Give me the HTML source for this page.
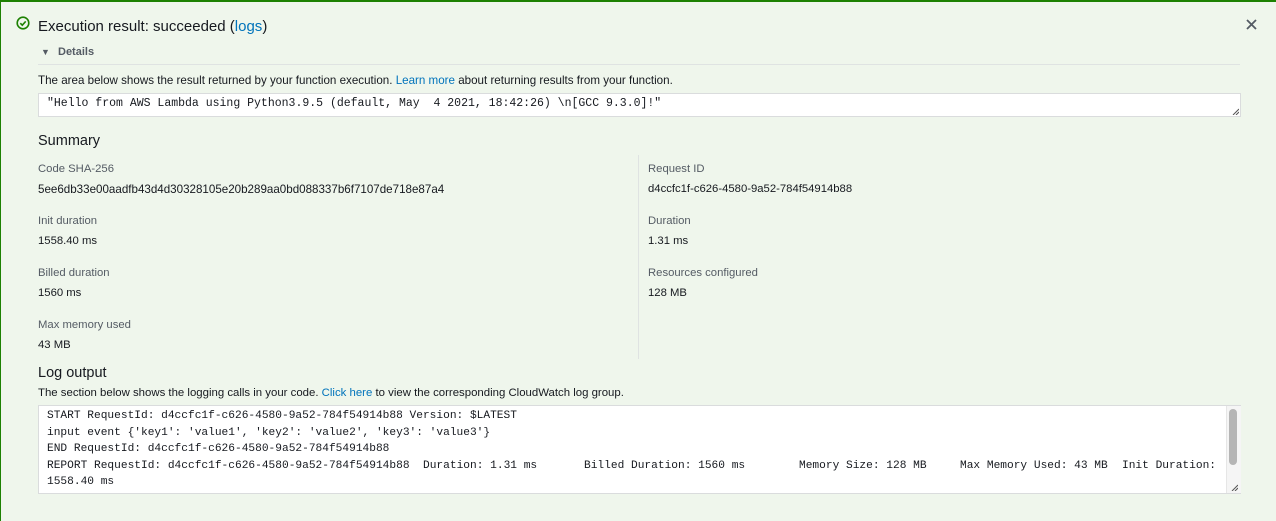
<!DOCTYPE html>
<html><head><style>
body{margin:0;width:1276px;height:521px;overflow:hidden;background:#eff6ec;font-family:"Liberation Sans",sans-serif;color:#16191f;position:relative}
.frame{position:absolute;left:0;top:0;width:1276px;height:521px;border-left:1px solid #1d8102;border-top:2px solid #1d8102;box-sizing:border-box}
.a{position:absolute;white-space:pre}
.lbl{font-size:11.3px;color:#545b64}
.val{font-size:11.3px;color:#16191f}
.h{font-size:14.5px;color:#16191f}
a{color:#0073bb;text-decoration:none}
.box{position:absolute;background:#fff;border:1px solid #dadcdd;box-sizing:border-box}
.mono{font-family:"Liberation Mono",monospace;font-size:11.5px;color:#16191f}
.lg{font-size:11.2px}
</style></head><body>
<div class="frame"></div>
<svg class="a" style="left:16px;top:16px" width="14" height="14" viewBox="0 0 14 14"><circle cx="7" cy="7" r="5.8" fill="none" stroke="#1d8102" stroke-width="1.6"/><path d="M4.3 7.2l2 2 3.4-3.8" fill="none" stroke="#1d8102" stroke-width="1.6"/></svg>
<div class="a" style="left:38px;top:18px;font-size:15px">Execution result: succeeded (<a>logs</a>)</div>
<svg class="a" style="left:1246px;top:19px" width="11" height="11" viewBox="0 0 11 11"><path d="M1 1L10 10M10 1L1 10" stroke="#545b64" stroke-width="1.8"/></svg>
<div class="a" style="left:41px;top:47px;font-size:9px;color:#545b64">▼</div>
<div class="a" style="left:58px;top:46px;font-size:11px;font-weight:bold;color:#545b64">Details</div>
<div class="a" style="left:38px;top:64px;width:1202px;height:1px;background:#dfe3e2"></div>
<div class="a" style="left:38px;top:74px;font-size:11.6px">The area below shows the result returned by your function execution. <a>Learn more</a> about returning results from your function.</div>
<div class="box" style="left:38px;top:93px;width:1203px;height:24px"></div>
<div class="a mono" style="left:47px;top:97px">"Hello from AWS Lambda using Python3.9.5 (default, May  4 2021, 18:42:26) \n[GCC 9.3.0]!"</div>
<svg class="a" style="left:1232px;top:108px" width="7" height="7"><path d="M1 7L7 1M4 7L7 4" stroke="#555" stroke-width="1"/></svg>
<div class="a h" style="left:38px;top:133px">Summary</div>
<div class="a" style="left:638px;top:155px;width:1px;height:204px;background:#dfe3e2"></div>
<div class="a lbl" style="left:38px;top:163px">Code SHA-256</div>
<div class="a val" style="left:38px;top:183px;font-size:11.6px">5ee6db33e00aadfb43d4d30328105e20b289aa0bd088337b6f7107de718e87a4</div>
<div class="a lbl" style="left:38px;top:215px">Init duration</div>
<div class="a val" style="left:38px;top:235px">1558.40 ms</div>
<div class="a lbl" style="left:38px;top:267px">Billed duration</div>
<div class="a val" style="left:38px;top:287px">1560 ms</div>
<div class="a lbl" style="left:38px;top:319px">Max memory used</div>
<div class="a val" style="left:38px;top:339px">43 MB</div>
<div class="a lbl" style="left:648px;top:163px">Request ID</div>
<div class="a val" style="left:648px;top:183px">d4ccfc1f-c626-4580-9a52-784f54914b88</div>
<div class="a lbl" style="left:648px;top:215px">Duration</div>
<div class="a val" style="left:648px;top:235px">1.31 ms</div>
<div class="a lbl" style="left:648px;top:267px">Resources configured</div>
<div class="a val" style="left:648px;top:287px">128 MB</div>
<div class="a h" style="left:38px;top:365px">Log output</div>
<div class="a" style="left:38px;top:387px;font-size:11.4px">The section below shows the logging calls in your code. <a>Click here</a> to view the corresponding CloudWatch log group.</div>
<div class="box" style="left:38px;top:405px;width:1203px;height:89px"></div>
<div class="a" style="left:1226px;top:406px;width:14px;height:87px;background:#f5f5f5;border-left:1px solid #e6e6e6"></div>
<div class="a" style="left:1229px;top:409px;width:8px;height:56px;background:#b5b5b5;border-radius:4px"></div>
<div class="a mono lg" style="left:47px;top:410px">START RequestId: d4ccfc1f-c626-4580-9a52-784f54914b88 Version: $LATEST</div>
<div class="a mono lg" style="left:47px;top:426.5px">input event {'key1': 'value1', 'key2': 'value2', 'key3': 'value3'}</div>
<div class="a mono lg" style="left:47px;top:443px">END RequestId: d4ccfc1f-c626-4580-9a52-784f54914b88</div>
<div class="a mono lg" style="left:47px;top:459.5px">REPORT RequestId: d4ccfc1f-c626-4580-9a52-784f54914b88</div>
<div class="a mono lg" style="left:423px;top:459.5px">Duration: 1.31 ms</div>
<div class="a mono lg" style="left:584px;top:459.5px">Billed Duration: 1560 ms</div>
<div class="a mono lg" style="left:799px;top:459.5px">Memory Size: 128 MB</div>
<div class="a mono lg" style="left:960px;top:459.5px">Max Memory Used: 43 MB</div>
<div class="a mono lg" style="left:1122px;top:459.5px">Init Duration:</div>
<div class="a mono lg" style="left:47px;top:476px">1558.40 ms</div>
<svg class="a" style="left:1231px;top:484px" width="7" height="7"><path d="M1 7L7 1M4 7L7 4" stroke="#555" stroke-width="1"/></svg>
</body></html>
